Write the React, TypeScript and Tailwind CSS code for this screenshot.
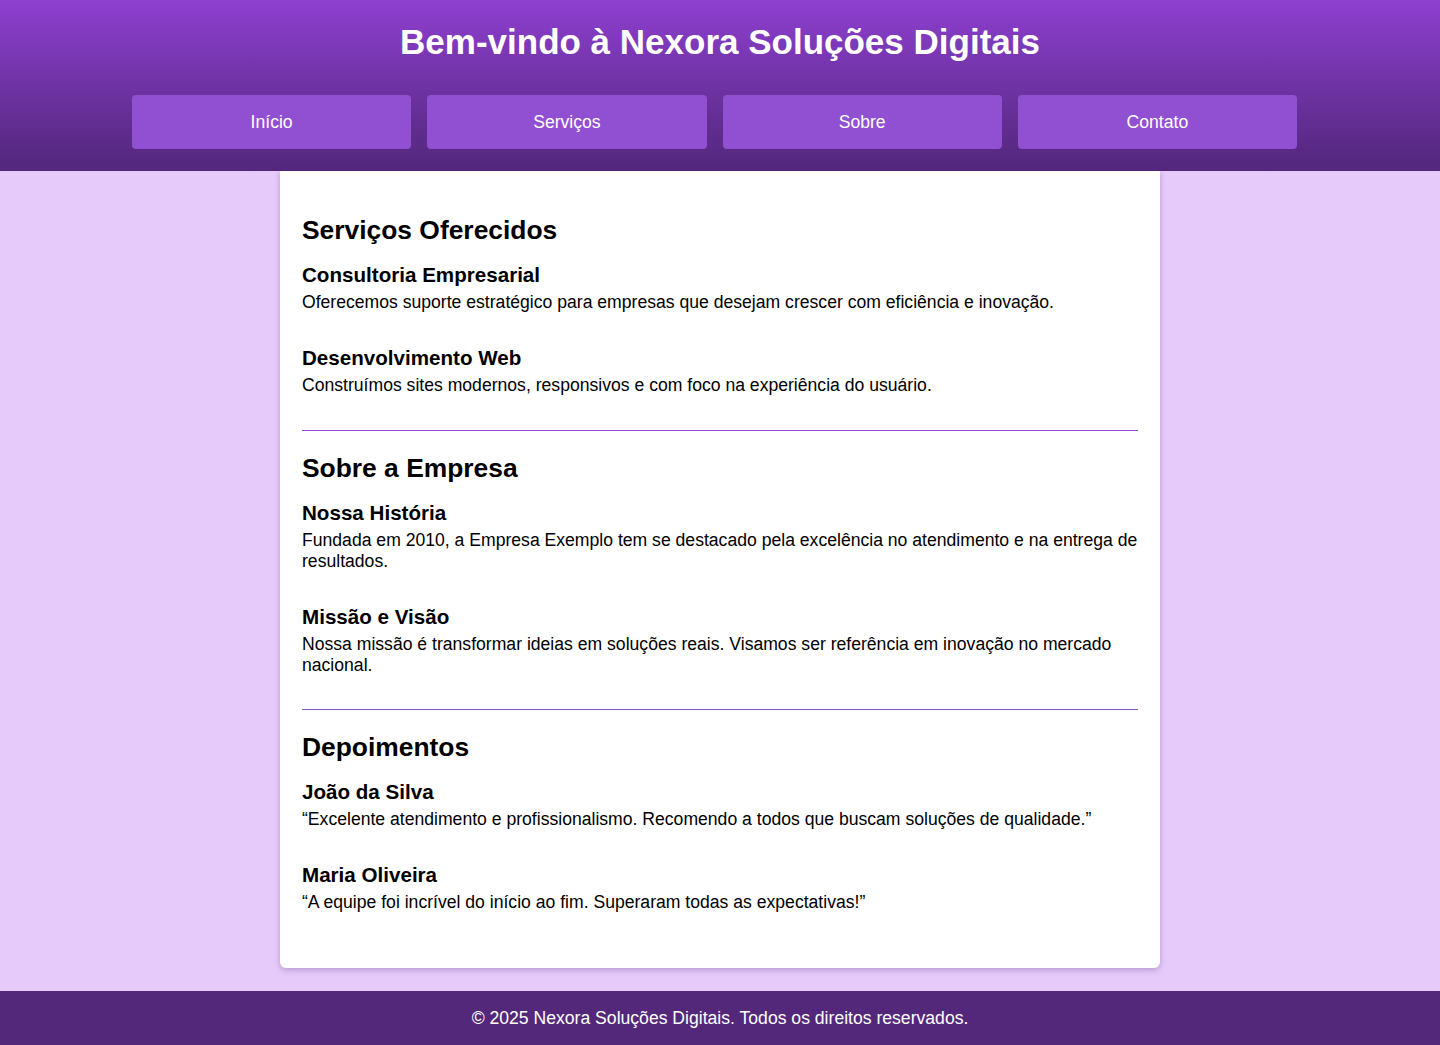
const navItems = ["Início", "Serviços", "Sobre", "Contato"];

type Item = { title: string; text: string };

const sections: { title: string; items: Item[]; line?: string }[] = [
  {
    title: "Serviços Oferecidos",
    line: "bg-[#9b4ad8]",
    items: [
      {
        title: "Consultoria Empresarial",
        text: "Oferecemos suporte estratégico para empresas que desejam crescer com eficiência e inovação.",
      },
      {
        title: "Desenvolvimento Web",
        text: "Construímos sites modernos, responsivos e com foco na experiência do usuário.",
      },
    ],
  },
  {
    title: "Sobre a Empresa",
    line: "bg-[#8753c4]",
    items: [
      {
        title: "Nossa História",
        text: "Fundada em 2010, a Empresa Exemplo tem se destacado pela excelência no atendimento e na entrega de resultados.",
      },
      {
        title: "Missão e Visão",
        text: "Nossa missão é transformar ideias em soluções reais. Visamos ser referência em inovação no mercado nacional.",
      },
    ],
  },
  {
    title: "Depoimentos",
    items: [
      {
        title: "João da Silva",
        text: "“Excelente atendimento e profissionalismo. Recomendo a todos que buscam soluções de qualidade.”",
      },
      {
        title: "Maria Oliveira",
        text: "“A equipe foi incrível do início ao fim. Superaram todas as expectativas!”",
      },
    ],
  },
];

export default function App() {
  return (
    <div className="min-h-[1045px] bg-[#e6cbfa] font-['Liberation_Sans',Arial,sans-serif] text-black">
      <header className="bg-gradient-to-b from-[#8e3fd0] to-[#52277b] pt-[22px] pb-[22px]">
        <h1 className="text-center text-[35px] leading-[40px] font-bold text-white">
          Bem-vindo à Nexora Soluções Digitais
        </h1>
        <nav className="mt-[33px] ml-[132px] grid w-[1165px] grid-cols-4 gap-4">
          {navItems.map((item) => (
            <a
              key={item}
              href="#"
              className="flex h-[54px] items-center justify-center rounded-[4px] bg-[#9150d2] text-[17.6px] text-white"
            >
              {item}
            </a>
          ))}
        </nav>
      </header>

      <main className="mx-auto mb-[23px] w-[880px] rounded-b-md bg-white px-[22px] pt-[44px] pb-[55px] shadow-[0_2px_6px_rgba(80,30,120,0.3)]">
        {sections.map((section, i) => (
          <section key={section.title}>
            <h2 className="text-[26.4px] leading-[30px] font-bold">{section.title}</h2>
            <div className="mt-[18px] flex flex-col gap-[33px]">
              {section.items.map((item) => (
                <div key={item.title}>
                  <h3 className="text-[20.6px] leading-[24px] font-bold">{item.title}</h3>
                  <p className="mt-[5px] text-[17.6px] leading-[21px]">{item.text}</p>
                </div>
              ))}
            </div>
            {section.line && (
              <div className={`${i === 0 ? "mt-[34px]" : "mt-[33px]"} mb-[22px] h-px ${section.line}`} />
            )}
          </section>
        ))}
      </main>

      <footer className="flex h-[54px] items-center justify-center bg-[#53287b] text-[17.6px] text-white">
        © 2025 Nexora Soluções Digitais. Todos os direitos reservados.
      </footer>
    </div>
  );
}
